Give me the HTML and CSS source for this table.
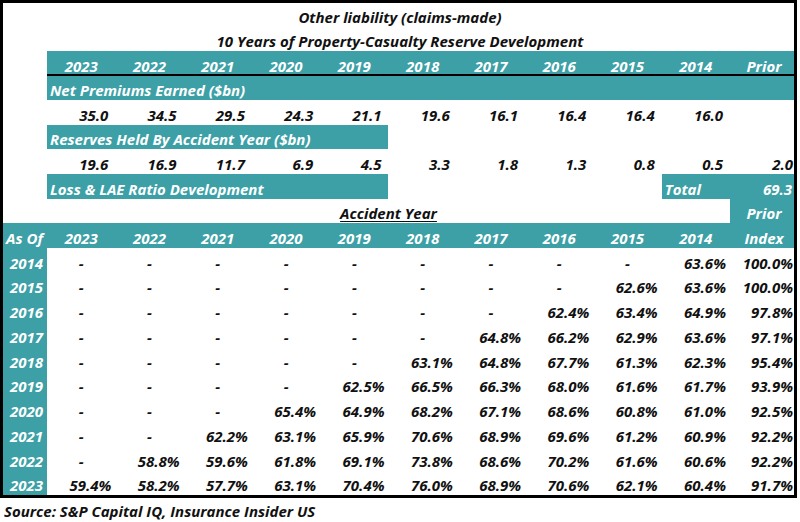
FILE: index.html
```html
<!DOCTYPE html>
<html lang="en">
<head>
<meta charset="utf-8">
<title>Other liability (claims-made) – Reserve Development</title>
<link rel="stylesheet" href="styles.css">
</head>
<body>
<div class="sheet">
  <div class="grid">
    <div class="c title span12">Other liability (claims-made)</div>
    <div class="c title span12">10 Years of Property-Casualty Reserve Development</div>

    <div class="c"></div>
    <div class="c teal ctr rule">2023</div>
    <div class="c teal ctr rule">2022</div>
    <div class="c teal ctr rule">2021</div>
    <div class="c teal ctr rule">2020</div>
    <div class="c teal ctr rule">2019</div>
    <div class="c teal ctr rule">2018</div>
    <div class="c teal ctr rule">2017</div>
    <div class="c teal ctr rule">2016</div>
    <div class="c teal ctr rule">2015</div>
    <div class="c teal ctr rule">2014</div>
    <div class="c teal ctr rule lastc">Prior</div>

    <div class="c"></div>
    <div class="c teal lbl span11">Net Premiums Earned ($bn)</div>

    <div class="c"></div>
    <div class="c num">35.0</div>
    <div class="c num">34.5</div>
    <div class="c num">29.5</div>
    <div class="c num">24.3</div>
    <div class="c num">21.1</div>
    <div class="c num">19.6</div>
    <div class="c num">16.1</div>
    <div class="c num">16.4</div>
    <div class="c num">16.4</div>
    <div class="c num">16.0</div>
    <div class="c"></div>

    <div class="c"></div>
    <div class="c teal lbl span5">Reserves Held By Accident Year ($bn)</div>
    <div class="c span6"></div>

    <div class="c"></div>
    <div class="c num">19.6</div>
    <div class="c num">16.9</div>
    <div class="c num">11.7</div>
    <div class="c num">6.9</div>
    <div class="c num">4.5</div>
    <div class="c num">3.3</div>
    <div class="c num">1.8</div>
    <div class="c num">1.3</div>
    <div class="c num">0.8</div>
    <div class="c num">0.5</div>
    <div class="c num lastv">2.0</div>

    <div class="c"></div>
    <div class="c teal lbl span5">Loss &amp; LAE Ratio Development</div>
    <div class="c span4"></div>
    <div class="c teal total span2"><span>Total</span><span>69.3</span></div>

    <div class="c"></div>
    <div class="c ctr span10"><span class="ul">Accident Year</span></div>
    <div class="c teal ctr lastc">Prior</div>

    <div class="c teal asof">As Of</div>
    <div class="c teal ctr">2023</div>
    <div class="c teal ctr">2022</div>
    <div class="c teal ctr">2021</div>
    <div class="c teal ctr">2020</div>
    <div class="c teal ctr">2019</div>
    <div class="c teal ctr">2018</div>
    <div class="c teal ctr">2017</div>
    <div class="c teal ctr">2016</div>
    <div class="c teal ctr">2015</div>
    <div class="c teal ctr">2014</div>
    <div class="c teal ctr lastc">Index</div>

    <div class="c teal asof">2014</div>
    <div class="c ctr">-</div><div class="c ctr">-</div><div class="c ctr">-</div><div class="c ctr">-</div><div class="c ctr">-</div>
    <div class="c ctr">-</div><div class="c ctr">-</div><div class="c ctr">-</div><div class="c ctr">-</div><div class="c pct">63.6%</div>
    <div class="c pct lastv">100.0%</div>

    <div class="c teal asof">2015</div>
    <div class="c ctr">-</div><div class="c ctr">-</div><div class="c ctr">-</div><div class="c ctr">-</div><div class="c ctr">-</div>
    <div class="c ctr">-</div><div class="c ctr">-</div><div class="c ctr">-</div><div class="c pct">62.6%</div><div class="c pct">63.6%</div>
    <div class="c pct lastv">100.0%</div>

    <div class="c teal asof">2016</div>
    <div class="c ctr">-</div><div class="c ctr">-</div><div class="c ctr">-</div><div class="c ctr">-</div><div class="c ctr">-</div>
    <div class="c ctr">-</div><div class="c ctr">-</div><div class="c pct">62.4%</div><div class="c pct">63.4%</div><div class="c pct">64.9%</div>
    <div class="c pct lastv">97.8%</div>

    <div class="c teal asof">2017</div>
    <div class="c ctr">-</div><div class="c ctr">-</div><div class="c ctr">-</div><div class="c ctr">-</div><div class="c ctr">-</div>
    <div class="c ctr">-</div><div class="c pct">64.8%</div><div class="c pct">66.2%</div><div class="c pct">62.9%</div><div class="c pct">63.6%</div>
    <div class="c pct lastv">97.1%</div>

    <div class="c teal asof">2018</div>
    <div class="c ctr">-</div><div class="c ctr">-</div><div class="c ctr">-</div><div class="c ctr">-</div><div class="c ctr">-</div>
    <div class="c pct">63.1%</div><div class="c pct">64.8%</div><div class="c pct">67.7%</div><div class="c pct">61.3%</div><div class="c pct">62.3%</div>
    <div class="c pct lastv">95.4%</div>

    <div class="c teal asof">2019</div>
    <div class="c ctr">-</div><div class="c ctr">-</div><div class="c ctr">-</div><div class="c ctr">-</div><div class="c pct">62.5%</div>
    <div class="c pct">66.5%</div><div class="c pct">66.3%</div><div class="c pct">68.0%</div><div class="c pct">61.6%</div><div class="c pct">61.7%</div>
    <div class="c pct lastv">93.9%</div>

    <div class="c teal asof">2020</div>
    <div class="c ctr">-</div><div class="c ctr">-</div><div class="c ctr">-</div><div class="c pct">65.4%</div><div class="c pct">64.9%</div>
    <div class="c pct">68.2%</div><div class="c pct">67.1%</div><div class="c pct">68.6%</div><div class="c pct">60.8%</div><div class="c pct">61.0%</div>
    <div class="c pct lastv">92.5%</div>

    <div class="c teal asof">2021</div>
    <div class="c ctr">-</div><div class="c ctr">-</div><div class="c pct">62.2%</div><div class="c pct">63.1%</div><div class="c pct">65.9%</div>
    <div class="c pct">70.6%</div><div class="c pct">68.9%</div><div class="c pct">69.6%</div><div class="c pct">61.2%</div><div class="c pct">60.9%</div>
    <div class="c pct lastv">92.2%</div>

    <div class="c teal asof">2022</div>
    <div class="c ctr">-</div><div class="c pct">58.8%</div><div class="c pct">59.6%</div><div class="c pct">61.8%</div><div class="c pct">69.1%</div>
    <div class="c pct">73.8%</div><div class="c pct">68.6%</div><div class="c pct">70.2%</div><div class="c pct">61.6%</div><div class="c pct">60.6%</div>
    <div class="c pct lastv">92.2%</div>

    <div class="c teal asof">2023</div>
    <div class="c pct">59.4%</div><div class="c pct">58.2%</div><div class="c pct">57.7%</div><div class="c pct">63.1%</div><div class="c pct">70.4%</div>
    <div class="c pct">76.0%</div><div class="c pct">68.9%</div><div class="c pct">70.6%</div><div class="c pct">62.1%</div><div class="c pct">60.4%</div>
    <div class="c pct lastv">91.7%</div>
  </div>
</div>
<p class="source">Source: S&amp;P Capital IQ, Insurance Insider US</p>
</body>
</html>
```

FILE: styles.css
```css
* {
  box-sizing: border-box;
}

html,
body {
  margin: 0;
  padding: 0;
  background: #ffffff;
}

body {
  font-family: "Open Sans", "Liberation Sans", sans-serif;
  font-weight: 700;
  font-style: italic;
  font-size: 15px;
  color: #111111;
}

.sheet {
  width: 797px;
  border: 3px solid #000000;
  overflow: hidden;
}

.grid {
  display: grid;
  grid-template-columns: 44px repeat(10, 68.3px) 1fr;
  grid-template-rows: 24px 24px repeat(8, 24.6px) repeat(10, 24.75px);
}

.c {
  display: flex;
  align-items: flex-end;
  line-height: 19px;
  white-space: nowrap;
  min-width: 0;
}

.span2 { grid-column: span 2; }
.span4 { grid-column: span 4; }
.span5 { grid-column: span 5; }
.span6 { grid-column: span 6; }
.span10 { grid-column: span 10; }
.span11 { grid-column: span 11; }
.span12 { grid-column: span 12; }

.title {
  justify-content: center;
  padding-left: 3px;
}

.teal {
  background: #3ca0a6;
  color: #ffffff;
}

.rule {
  box-shadow: inset 0 -2px 0 #000000;
}

.ctr {
  justify-content: center;
}

.lbl {
  padding-left: 3px;
}

.num {
  justify-content: flex-end;
  padding-right: 7px;
}

.pct {
  justify-content: flex-end;
  padding-right: 4px;
}

.lastc {
  padding-left: 4px;
}

.lastv {
  padding-right: 1px;
}

.asof {
  justify-content: flex-end;
  padding-right: 4px;
}

.total {
  justify-content: space-between;
  padding: 0 2px 0 3px;
}

.ul {
  text-decoration: underline;
  text-decoration-thickness: 1px;
  text-underline-offset: 2px;
}

.source {
  margin: 0;
  padding: 4px 0 0 4px;
  line-height: 19px;
}
```
